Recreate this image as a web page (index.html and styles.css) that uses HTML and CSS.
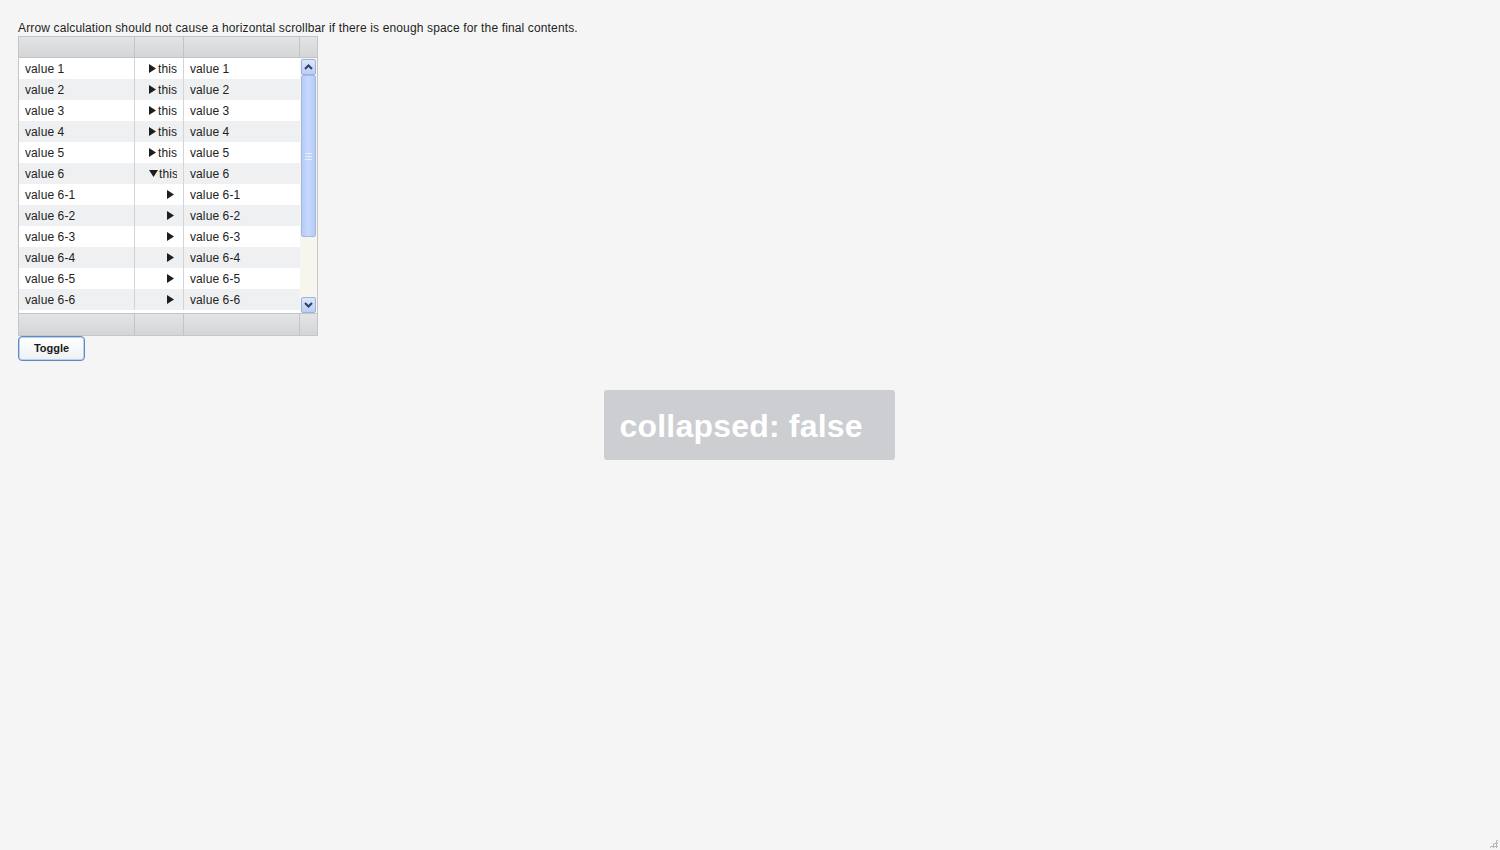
FILE: index.html
```html
<!DOCTYPE html>
<html>
<head>
<meta charset="utf-8">
<link rel="stylesheet" href="styles.css">
</head>
<body>
<div class="page">
  <p class="caption">Arrow calculation should not cause a horizontal scrollbar if there is enough space for the final contents.</p>
  <div class="table">
    <div class="hrow">
      <div class="hcell c1"></div><div class="hcell c2"></div><div class="hcell c3"></div><div class="hcell cs"></div>
    </div>
    <div class="body">
      <div class="rows">
        <div class="row"><div class="cell c1">value 1</div><div class="cell c2 tree"><div class="clip"><svg class="arr" width="7" height="9" viewBox="0 0 7 9"><path d="M0 0 L7 4.5 L0 9 Z"/></svg>this is</div></div><div class="cell c3">value 1</div></div>
        <div class="row alt"><div class="cell c1">value 2</div><div class="cell c2 tree"><div class="clip"><svg class="arr" width="7" height="9" viewBox="0 0 7 9"><path d="M0 0 L7 4.5 L0 9 Z"/></svg>this is</div></div><div class="cell c3">value 2</div></div>
        <div class="row"><div class="cell c1">value 3</div><div class="cell c2 tree"><div class="clip"><svg class="arr" width="7" height="9" viewBox="0 0 7 9"><path d="M0 0 L7 4.5 L0 9 Z"/></svg>this is</div></div><div class="cell c3">value 3</div></div>
        <div class="row alt"><div class="cell c1">value 4</div><div class="cell c2 tree"><div class="clip"><svg class="arr" width="7" height="9" viewBox="0 0 7 9"><path d="M0 0 L7 4.5 L0 9 Z"/></svg>this is</div></div><div class="cell c3">value 4</div></div>
        <div class="row"><div class="cell c1">value 5</div><div class="cell c2 tree"><div class="clip"><svg class="arr" width="7" height="9" viewBox="0 0 7 9"><path d="M0 0 L7 4.5 L0 9 Z"/></svg>this is</div></div><div class="cell c3">value 5</div></div>
        <div class="row alt"><div class="cell c1">value 6</div><div class="cell c2 tree"><div class="clip"><svg class="arr down" width="9" height="7" viewBox="0 0 9 7"><path d="M0 0 L9 0 L4.5 7 Z"/></svg>this is</div></div><div class="cell c3">value 6</div></div>
        <div class="row"><div class="cell c1">value 6-1</div><div class="cell c2 tree child"><div class="clip"><svg class="arr" width="7" height="9" viewBox="0 0 7 9"><path d="M0 0 L7 4.5 L0 9 Z"/></svg>this is</div></div><div class="cell c3">value 6-1</div></div>
        <div class="row alt"><div class="cell c1">value 6-2</div><div class="cell c2 tree child"><div class="clip"><svg class="arr" width="7" height="9" viewBox="0 0 7 9"><path d="M0 0 L7 4.5 L0 9 Z"/></svg>this is</div></div><div class="cell c3">value 6-2</div></div>
        <div class="row"><div class="cell c1">value 6-3</div><div class="cell c2 tree child"><div class="clip"><svg class="arr" width="7" height="9" viewBox="0 0 7 9"><path d="M0 0 L7 4.5 L0 9 Z"/></svg>this is</div></div><div class="cell c3">value 6-3</div></div>
        <div class="row alt"><div class="cell c1">value 6-4</div><div class="cell c2 tree child"><div class="clip"><svg class="arr" width="7" height="9" viewBox="0 0 7 9"><path d="M0 0 L7 4.5 L0 9 Z"/></svg>this is</div></div><div class="cell c3">value 6-4</div></div>
        <div class="row"><div class="cell c1">value 6-5</div><div class="cell c2 tree child"><div class="clip"><svg class="arr" width="7" height="9" viewBox="0 0 7 9"><path d="M0 0 L7 4.5 L0 9 Z"/></svg>this is</div></div><div class="cell c3">value 6-5</div></div>
        <div class="row alt"><div class="cell c1">value 6-6</div><div class="cell c2 tree child"><div class="clip"><svg class="arr" width="7" height="9" viewBox="0 0 7 9"><path d="M0 0 L7 4.5 L0 9 Z"/></svg>this is</div></div><div class="cell c3">value 6-6</div></div>
      </div>
      <div class="sbar">
        <div class="sbtn"><svg width="9" height="6" viewBox="0 0 9 6"><path d="M1 5 L4.5 1.5 L8 5" fill="none" stroke="#2e3f60" stroke-width="2"/></svg></div>
        <div class="thumb"><span class="grip"></span><span class="grip"></span><span class="grip"></span></div>
        <div class="track"></div>
        <div class="sbtn"><svg width="9" height="6" viewBox="0 0 9 6"><path d="M1 1 L4.5 4.5 L8 1" fill="none" stroke="#2e3f60" stroke-width="2"/></svg></div>
      </div>
    </div>
    <div class="frow">
      <div class="hcell c1"></div><div class="hcell c2"></div><div class="hcell c3"></div><div class="hcell cs"></div>
    </div>
  </div>
  <button class="btn">Toggle</button>
  <div class="status-wrap"><div class="status">collapsed: false</div></div>
</div>
<div class="resize"></div>
</body>
</html>
```
FILE: styles.css
```css
html, body {
  margin: 0;
  padding: 0;
  background: #f5f5f5;
  height: 100%;
}
body {
  font-family: "Liberation Sans", Arial, sans-serif;
  font-size: 12px;
  color: #222;
  position: relative;
  overflow: hidden;
}
.page {
  padding: 21px 0 0 18px;
}
.caption {
  margin: 0;
  line-height: 15px;
  color: #1f1f1f;
  letter-spacing: 0.14px;
}
.table {
  width: 298px;
  border: 1px solid #c5c6c7;
  background: #fff;
}
.hrow, .frow {
  display: flex;
  height: 20px;
  background: linear-gradient(#e3e4e6, #d3d5d7);
  border-bottom: 1px solid #c3c4c5;
}
.frow {
  border-bottom: none;
  border-top: 1px solid #c3c4c5;
  height: 21px;
}
.hcell {
  border-right: 1px solid #c3c4c5;
  box-sizing: border-box;
}
.c1 { width: 116px; }
.c2 { width: 49px; }
.c3 { width: 116px; }
.cs { width: 17px; border-right: none; }
.body {
  display: flex;
  height: 255px;
}
.rows {
  width: 281px;
  overflow: hidden;
}
.row {
  display: flex;
  height: 21px;
  background: #fff;
}
.row.alt { background: #eff0f1; }
.cell {
  box-sizing: border-box;
  border-right: 1px solid #d3d4d5;
  padding: 1px 6px 0;
  line-height: 20px;
  white-space: nowrap;
  overflow: hidden;
  letter-spacing: 0.1px;
}
.cell.c3 { border-right: none; }
.tree {
  padding-left: 14px;
  padding-right: 6px;
}
.tree.child { padding-left: 32px; }
.clip {
  overflow: hidden;
  white-space: nowrap;
}
.arr {
  display: inline-block;
  vertical-align: middle;
  margin-top: -2px;
  margin-right: 2px;
  fill: #1e1e1e;
}
.child .arr { margin-right: 6px; }
.arr.down { margin-right: 1px; margin-top: -3px; }
.sbar {
  width: 17px;
  display: flex;
  flex-direction: column;
  align-items: center;
  background: #f6f5ee;
  padding-top: 1px;
}
.sbtn {
  width: 13px;
  height: 14px;
  border: 1px solid #9db2da;
  border-radius: 2px;
  background: linear-gradient(#dce7fc, #b9cdf8);
  display: flex;
  align-items: center;
  justify-content: center;
  flex: none;
}
.thumb {
  width: 13px;
  height: 160px;
  border: 1px solid #a5b9e0;
  border-radius: 2px;
  background: linear-gradient(90deg, #b5cbf7, #c6d8fc 50%, #b5cbf7);
  display: flex;
  flex-direction: column;
  align-items: center;
  justify-content: center;
  gap: 2px;
  flex: none;
}
.grip {
  width: 7px;
  height: 1px;
  background: #e6eeff;
}
.track { flex: 1; }
.btn {
  display: block;
  margin-top: 0;
  width: 67px;
  height: 25px;
  font-family: "Liberation Sans", Arial, sans-serif;
  font-size: 11px;
  font-weight: bold;
  color: #1a1a1a;
  border: 1px solid #5e8ac4;
  border-radius: 4px;
  background: linear-gradient(#ffffff, #eef0f2);
  box-shadow: 0 0 0 1px #bcd0ee inset;
  padding: 0 0 1px;
}
.status-wrap {
  display: flex;
  justify-content: center;
  margin-top: 29px;
  padding-right: 20px;
}
.status {
  width: 291px;
  height: 70px;
  box-sizing: border-box;
  background: #ccced2;
  border-radius: 3px;
  color: #fff;
  font-family: "Liberation Sans", Arial, sans-serif;
  font-weight: bold;
  font-size: 32px;
  letter-spacing: 0.2px;
  line-height: 72px;
  padding-left: 16px;
  white-space: nowrap;
}
.resize {
  position: absolute;
  right: 2px;
  bottom: 2px;
  width: 9px;
  height: 9px;
  background:
    radial-gradient(circle, #b8b8b0 1px, transparent 1.2px) 0 0 / 3px 3px;
  clip-path: polygon(100% 0, 100% 100%, 0 100%);
}
```
